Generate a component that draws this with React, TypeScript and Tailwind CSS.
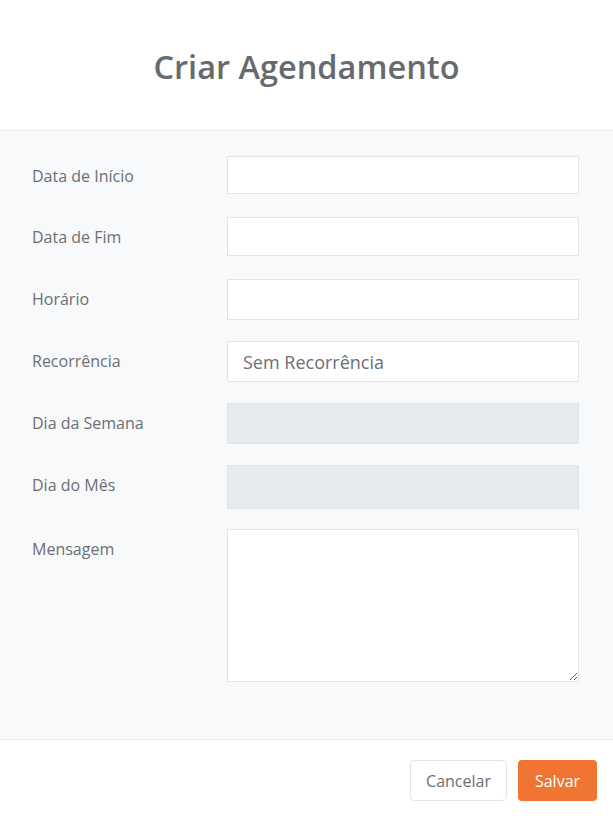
import React from "react";

const font = { fontFamily: '"Open Sans", sans-serif' };

const rows = [
  { label: "Data de Início", h: "h-[38px]", mb: "mb-[23px]" },
  { label: "Data de Fim", h: "h-[39px]", mb: "mb-[23px]" },
  { label: "Horário", h: "h-[41px]", mb: "mb-[21px]" },
];

export default function App() {
  return (
    <div className="w-[613px] h-[820px] bg-white flex flex-col font-['Open_Sans',sans-serif]">
      {/* Header */}
      <div className="h-[131px] flex items-center justify-center border-b border-[#e9ecef]">
        <h1 className="text-[32.5px] font-semibold text-[#676a6d] leading-none pt-[4px]">
          Criar Agendamento
        </h1>
      </div>

      {/* Body */}
      <div className="flex-1 bg-[#f8f9fb] pt-[25px] pl-[32px] pr-[34px]">
        {rows.map((r) => (
          <div key={r.label} className={`flex ${r.mb}`}>
            <label className="w-[195px] pt-[8px] text-[16px] leading-6 text-[#6c6f73]">{r.label}</label>
            <input className={`flex-1 ${r.h} bg-white border border-[#e2e4e7] outline-none`} />
          </div>
        ))}

        <div className="flex mb-[21px]">
          <label className="w-[195px] pt-[8px] text-[16px] leading-6 text-[#6c6f73]">Recorrência</label>
          <div className="flex-1 h-[41px] bg-white border border-[#e2e4e7] flex items-center pl-[15px] pt-[2px] text-[18px] text-[#6c6f73]">
            Sem Recorrência
          </div>
        </div>

        <div className="flex mb-[21px]">
          <label className="w-[195px] pt-[8px] text-[16px] leading-6 text-[#6c6f73]">Dia da Semana</label>
          <div className="flex-1 h-[41px] bg-[#e8ebee] border border-[#e2e4e7]" />
        </div>

        <div className="flex mb-[20px]">
          <label className="w-[195px] pt-[8px] text-[16px] leading-6 text-[#6c6f73]">Dia do Mês</label>
          <div className="flex-1 h-[44px] bg-[#e8ebee] border border-[#e2e4e7]" />
        </div>

        <div className="flex">
          <label className="w-[195px] pt-[8px] text-[16px] leading-6 text-[#6c6f73]">Mensagem</label>
          <textarea
            className="flex-1 h-[153px] bg-white border border-[#e2e4e7] outline-none"
            style={font}
          />
        </div>
      </div>

      {/* Footer */}
      <div className="h-[81px] border-t border-[#e9ecef] flex items-center justify-end gap-[11px] pr-[16px]">
        <button className="h-[41px] w-[97px] rounded-[4px] border border-[#e2e4e7] bg-white text-[16px] text-[#6c6f73] pt-[1px]">
          Cancelar
        </button>
        <button className="h-[41px] w-[79px] rounded-[4px] bg-[#f07532] text-[16px] font-medium text-white pt-[1px]">
          Salvar
        </button>
      </div>
    </div>
  );
}
